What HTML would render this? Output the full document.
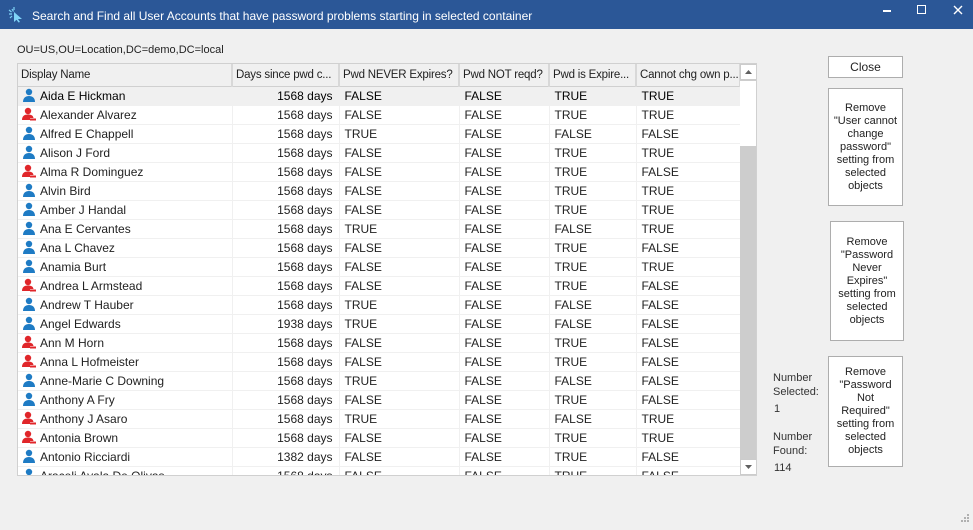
<!DOCTYPE html>
<html><head><meta charset="utf-8"><style>
*{margin:0;padding:0;box-sizing:border-box}
body{width:973px;height:530px;background:#f0f0f0;font-family:"Liberation Sans",sans-serif;position:relative;overflow:hidden;color:#000}
#tb{position:absolute;left:0;top:0;width:973px;height:29px;background:#2b5797;color:#fff;font-size:12px}
#tb .t{position:absolute;left:32px;top:9px}
.abs{position:absolute}
#grid{position:absolute;left:17px;top:63px;width:740px;height:413px;background:#fff;border:1px solid #d0d0d0;overflow:hidden}
table{border-collapse:collapse;table-layout:fixed;font-size:12px;position:absolute;left:0;top:0;width:722px}
th{height:22px;background:#f0f0f0;font-weight:normal;text-align:left;padding-left:3px;border-right:2px solid #d8d8d8;border-bottom:1px solid #d0d0d0;white-space:nowrap;overflow:hidden;color:#222;font-size:11.5px;letter-spacing:-0.2px}
td{height:19px;border-right:1px solid #f0f0f0;border-bottom:1px solid #f0f0f0;padding-left:5px;white-space:nowrap;overflow:hidden;color:#222}
td.n{padding-left:4px}
td.d{text-align:right;padding-right:6px}
tr.sel td{background:#f0f0f0;color:#000}
.ic{display:inline-block;width:14px;height:14px;vertical-align:-2px;margin-right:4px}
#sb{position:absolute;left:722px;top:0;width:17px;height:411px;background:#cdcdcd}
.btn{position:absolute;background:#fff;border:1px solid #adadad;font-size:11px;text-align:center;color:#222;line-height:13px;display:flex;align-items:center;justify-content:center}
.lbl{position:absolute;font-size:11px;color:#333;line-height:14px}
</style></head><body>
<div id="tb">
<svg class="abs" style="left:8px;top:7px" width="16" height="16" viewBox="0 0 16 16"><path d="M6 5 L14 12 L10 12 L12 15 L10.5 15.5 L8.5 12.8 L6 15Z" fill="#7fd3f7"/><path d="M1 7h3M4 2l1.5 2.5M1 3l2.5 2M2 11l2-2M6 0v3" stroke="#7fd3f7" stroke-width="1.2"/></svg>
<span class="t">Search and Find all User Accounts that have password problems starting in selected container</span>
<div class="abs" style="left:883px;top:10px;width:8px;height:2px;background:#fff"></div>
<div class="abs" style="left:917px;top:5px;width:9px;height:9px;border:1.5px solid #fff"></div>
<svg class="abs" style="left:953px;top:5px" width="10" height="10"><path d="M1 1L9 9M9 1L1 9" stroke="#fff" stroke-width="1.4"/></svg>
</div>
<div class="abs" style="left:17px;top:44px;font-size:11px;color:#222">OU=US,OU=Location,DC=demo,DC=local</div>
<div id="grid">
<table>
<colgroup><col style="width:214px"><col style="width:107px"><col style="width:120px"><col style="width:90px"><col style="width:87px"><col style="width:104px"></colgroup>
<tr><th>Display Name</th><th>Days since pwd c...</th><th>Pwd NEVER Expires?</th><th>Pwd NOT reqd?</th><th>Pwd is Expire...</th><th>Cannot chg own p...</th></tr>
<tbody id="rows"></tbody>
</table>
<div id="sb">
<div class="abs" style="left:0;top:0;width:17px;height:16px;background:#fff;border:1px solid #ccc"><svg width="15" height="14"><path d="M4 9h7L7.5 5Z" fill="#606060"/></svg></div>
<div class="abs" style="left:0;top:17px;width:17px;height:65px;background:#fff"></div>
<div class="abs" style="left:0;top:395px;width:17px;height:16px;background:#fff;border:1px solid #ccc"><svg width="15" height="14"><path d="M4 5h7L7.5 9Z" fill="#606060"/></svg></div>
</div>
</div>
<div class="btn" style="left:828px;top:56px;width:75px;height:22px;font-size:12px">Close</div>
<div class="btn" style="left:828px;top:88px;width:75px;height:118px">Remove<br>"User cannot<br>change<br>password"<br>setting from<br>selected<br>objects</div>
<div class="btn" style="left:830px;top:221px;width:74px;height:120px">Remove<br>"Password<br>Never<br>Expires"<br>setting from<br>selected<br>objects</div>
<div class="btn" style="left:828px;top:356px;width:75px;height:111px">Remove<br>"Password<br>Not<br>Required"<br>setting from<br>selected<br>objects</div>
<div class="lbl" style="left:773px;top:371px">Number<br>Selected:</div>
<div class="lbl" style="left:774px;top:402px">1</div>
<div class="lbl" style="left:773px;top:430px">Number<br>Found:</div>
<div class="lbl" style="left:774px;top:461px">114</div>
<svg class="abs" style="left:960px;top:513px" width="10" height="10"><g fill="#b0b0b0"><rect x="7" y="1" width="2" height="2"/><rect x="4" y="4" width="2" height="2"/><rect x="7" y="4" width="2" height="2"/><rect x="1" y="7" width="2" height="2"/><rect x="4" y="7" width="2" height="2"/><rect x="7" y="7" width="2" height="2"/></g></svg>
<script>
var d=[["Aida E Hickman","1568","FALSE","FALSE","TRUE","TRUE",0],
["Alexander Alvarez","1568","FALSE","FALSE","TRUE","TRUE",1],
["Alfred E Chappell","1568","TRUE","FALSE","FALSE","FALSE",0],
["Alison J Ford","1568","FALSE","FALSE","TRUE","TRUE",0],
["Alma R Dominguez","1568","FALSE","FALSE","TRUE","FALSE",1],
["Alvin Bird","1568","FALSE","FALSE","TRUE","TRUE",0],
["Amber J Handal","1568","FALSE","FALSE","TRUE","TRUE",0],
["Ana E Cervantes","1568","TRUE","FALSE","FALSE","TRUE",0],
["Ana L Chavez","1568","FALSE","FALSE","TRUE","FALSE",0],
["Anamia Burt","1568","FALSE","FALSE","TRUE","TRUE",0],
["Andrea L Armstead","1568","FALSE","FALSE","TRUE","FALSE",1],
["Andrew T Hauber","1568","TRUE","FALSE","FALSE","FALSE",0],
["Angel Edwards","1938","TRUE","FALSE","FALSE","FALSE",0],
["Ann M Horn","1568","FALSE","FALSE","TRUE","FALSE",1],
["Anna L Hofmeister","1568","FALSE","FALSE","TRUE","FALSE",1],
["Anne-Marie C Downing","1568","TRUE","FALSE","FALSE","FALSE",0],
["Anthony A Fry","1568","FALSE","FALSE","TRUE","FALSE",0],
["Anthony J Asaro","1568","TRUE","FALSE","FALSE","TRUE",1],
["Antonia Brown","1568","FALSE","FALSE","TRUE","TRUE",1],
["Antonio Ricciardi","1382","FALSE","FALSE","TRUE","FALSE",0],
["Araceli Ayala De Olivas","1568","FALSE","FALSE","TRUE","FALSE",0]];
var blue='<svg class="ic" viewBox="0 0 14 14"><circle cx="7" cy="4" r="3.2" fill="#1e7bc4"/><path d="M1 14c0-4 2.5-6 6-6s6 2 6 6z" fill="#1e7bc4"/></svg>';
var red='<svg class="ic" viewBox="0 0 14 14"><circle cx="6" cy="4" r="3.2" fill="#e0262a"/><path d="M0 13c0-4 2.5-5.5 6-5.5s5 1 5.5 3.5H8v2z" fill="#e0262a"/><rect x="8" y="11.5" width="6" height="2" fill="#e0262a"/></svg>';
var h='';d.forEach(function(r,i){h+='<tr'+(i==0?' class="sel"':'')+'><td class="n">'+(r[6]?red:blue)+r[0]+'</td><td class="d">'+r[1]+' days</td><td>'+r[2]+'</td><td>'+r[3]+'</td><td>'+r[4]+'</td><td>'+r[5]+'</td></tr>'});
document.getElementById('rows').innerHTML=h;
</script>
</body></html>
